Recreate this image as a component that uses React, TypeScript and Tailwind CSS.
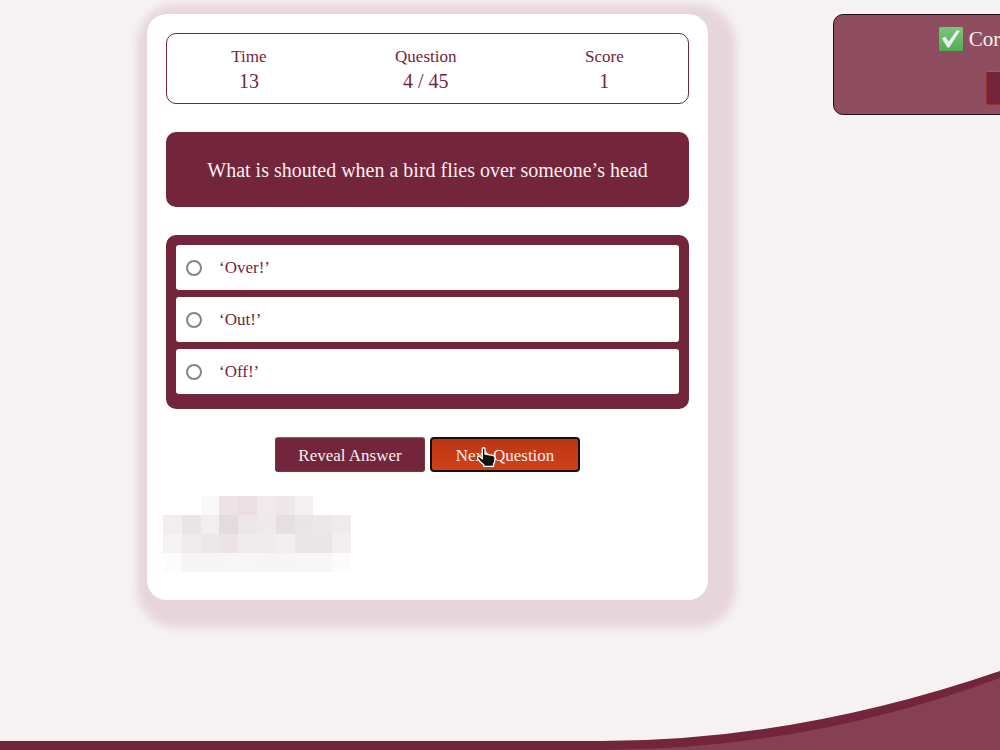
import { useState } from "react";

const stats = [
  { label: "Time", value: "13" },
  { label: "Question", value: "4 / 45" },
  { label: "Score", value: "1" },
];

const answers = ["‘Over!’", "‘Out!’", "‘Off!’"];

const mosaic = [
  ["#ffffff", "#ffffff", "#fbf8f9", "#ede3e6", "#ecdfe3", "#f0eaed", "#eee7ea", "#f4eff1", "#ffffff", "#ffffff"],
  ["#f2eef0", "#e9e4e6", "#f1edf0", "#e4dbdf", "#ebe7e8", "#eee9ed", "#e6dfe0", "#e9e5e7", "#ece8ea", "#efebed"],
  ["#f5f2f4", "#efebed", "#ebe6e8", "#ede2e6", "#efebee", "#efecee", "#f3eff1", "#eae6e7", "#eae5e8", "#f2edef"],
  ["#fdfbfc", "#f7f4f5", "#f7f4f6", "#f8f5f6", "#f9f6f7", "#f7f4f6", "#f7f4f5", "#f9f6f7", "#f9f6f7", "#fcfafb"],
];

function Swoosh() {
  return (
    <svg
      className="absolute bottom-0 left-0 h-20 w-full"
      viewBox="0 0 1000 80"
      preserveAspectRatio="none"
      aria-hidden="true"
    >
      <path d="M0 71H600Q796 71 1000 1V80H0Z" fill="#73253b" />
      <path d="M600 80Q806 80 1000 8V80Z" fill="#864053" />
    </svg>
  );
}

function HandPointer() {
  return (
    <svg
      className="pointer-events-none absolute left-11 top-2 h-6 w-6"
      viewBox="0 0 24 24"
      aria-hidden="true"
    >
      <path
        d="M8.3 4c0-1.7 2.7-1.7 2.7 0v5l7.6 1.3c1.7.3 2.5 1.3 2.4 2.7l-.3 3.4c-.1 1.3-.8 1.8-1.2 2.7v2.3H9.8v-1.6L6.4 17l-2.7-3.6c-.8-1.4.9-2.6 2.2-1.6l2.4 2Z"
        fill="#111111"
        stroke="#ffffff"
        strokeWidth="1.3"
        strokeLinejoin="round"
      />
    </svg>
  );
}

function CheckMark() {
  return (
    <svg className="h-6 w-6 shrink-0" viewBox="0 0 24 24" aria-hidden="true">
      <defs>
        <linearGradient id="tick" x1="0" y1="0" x2="0" y2="1">
          <stop offset="0" stopColor="#7cc47f" />
          <stop offset="1" stopColor="#4caf50" />
        </linearGradient>
      </defs>
      <rect width="24" height="24" rx="1.5" fill="url(#tick)" />
      <path d="M3 11.6 6.2 9.6l3.4 5L17.6 3.4l3.4.4L10.2 20.4H8.4Z" fill="#eeeeee" />
    </svg>
  );
}

export default function App() {
  const [choice, setChoice] = useState<string | null>(null);

  return (
    <div className="relative min-h-screen overflow-hidden bg-[#f6f2f4] font-['Liberation_Serif',serif] text-[#73253b]">
      <Swoosh />
      <div className="relative flex items-start pt-3.5">
        <main className="ml-[14.7%] w-[56.1%] shrink-0 rounded-[20px] bg-white p-[19px] pb-7 shadow-[9px_9px_8px_19px_#e6d6dc]">
          <dl className="flex h-[71px] items-center justify-around rounded-[10px] border border-[#73253b] text-center">
            {stats.map((s) => (
              <div key={s.label}>
                <dt className="text-[17px] leading-6">{s.label}</dt>
                <dd className="text-[20px] leading-6">{s.value}</dd>
              </div>
            ))}
          </dl>

          <h1 className="mt-7 flex min-h-[75px] items-center justify-center rounded-[10px] bg-[#73253b] px-4 text-center text-[20px] leading-6 text-[#faeef0]">
            What is shouted when a bird flies over someone’s head
          </h1>

          <div
            role="radiogroup"
            aria-label="Answers"
            className="mt-7 flex flex-col gap-[7px] rounded-[10px] bg-[#73253b] px-2.5 pt-2.5 pb-[15px]"
          >
            {answers.map((a) => (
              <label
                key={a}
                className="flex h-[45px] items-center gap-[17px] rounded-[3px] bg-white pl-2.5 text-[17px] leading-6"
              >
                <input
                  type="radio"
                  name="answer"
                  checked={choice === a}
                  onChange={() => setChoice(a)}
                  className="h-4 w-4 appearance-none rounded-full border-2 border-[#858585] checked:bg-[#73253b]"
                />
                <span>{a}</span>
              </label>
            ))}
          </div>

          <div className="mt-7 flex justify-center gap-[5px] text-[17px] leading-6 text-[#faeef0]">
            <button
              type="button"
              className="h-[35px] w-[150px] rounded-[3px] border border-[#8a3038] border-t-[#b8553c] bg-[#73253b] pt-0.5"
            >
              Reveal Answer
            </button>
            <div className="relative">
              <button
                type="button"
                className="h-[35px] w-[150px] rounded-[4px] border-2 border-[#141012] bg-linear-to-b from-[#bc3514] to-[#d04218] pt-0.5"
              >
                Next Question
              </button>
              <HandPointer />
            </div>
          </div>

          <div className="mt-6 -ml-[3px] grid w-[188px] grid-cols-10" aria-hidden="true">
            {mosaic.flat().map((c, i) => (
              <span key={i} className="h-[19px]" style={{ backgroundColor: c }} />
            ))}
          </div>
        </main>

        <aside className="ml-[12.5%] flex h-[101px] w-[37.4%] shrink-0 flex-col items-center rounded-[10px] border border-[#24121a] bg-[#8f4e60] pt-3 text-[#faeef0]">
          <p className="flex items-center gap-1.5 text-[21px] leading-6">
            <CheckMark />
            Correct Answer
          </p>
          <button
            type="button"
            className="mt-5 h-[34px] w-[68px] rounded-[3px] border border-[#9a2f2c] border-t-[#b8553c] bg-[#73253b] text-[17px]"
          >
            Next
          </button>
        </aside>
      </div>
    </div>
  );
}
